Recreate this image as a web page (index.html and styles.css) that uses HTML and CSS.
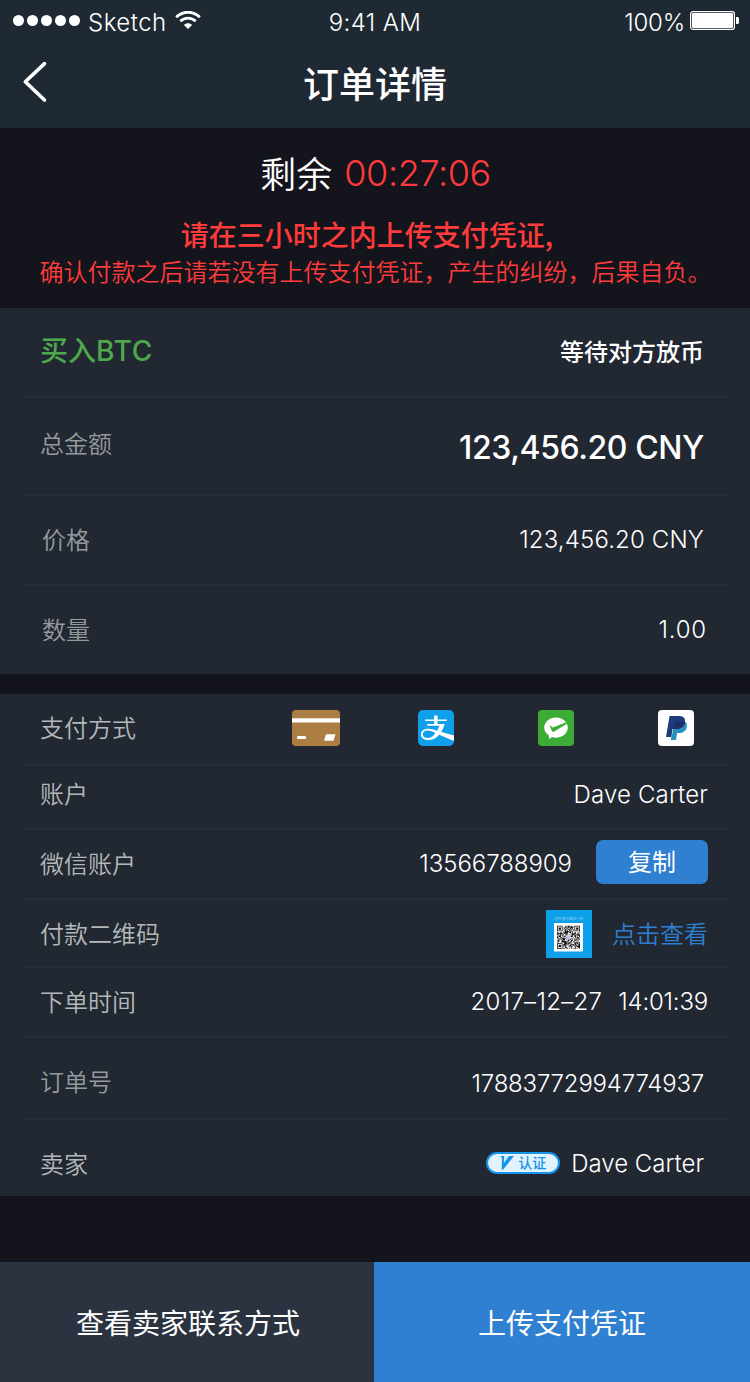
FILE: index.html
```html
<!DOCTYPE html>
<html lang="zh-CN">
<head>
<meta charset="utf-8">
<title>订单详情</title>
<link rel="stylesheet" href="styles.css">
</head>
<body>
<div class="screen">
  <header class="header">
    <div class="status">
      <div class="status-left">
        <span class="dots"><i class="dot"></i><i class="dot"></i><i class="dot"></i><i class="dot"></i><i class="dot"></i></span>
        <span class="carrier">Sketch</span>
        <svg class="wifi" width="26" height="19" viewBox="0 0 26 19" fill="none" stroke="#fff">
          <path d="M1.2 6.2C8 -.4 18 -.4 24.800 6.200" stroke-width="2.900"/>
          <path d="M5.300 10.300C9.700 6.100 16.300 6.100 20.700 10.300" stroke-width="2.700"/>
          <path d="M13 18L8.900 14C11.300 11.800 14.700 11.800 17.100 14Z" fill="#fff" stroke="none"/>
        </svg>
      </div>
      <span class="clock">9:41 AM</span>
      <div class="status-right">
        <span class="percent">100%</span>
        <svg width="50" height="20" viewBox="0 0 50 20">
          <rect x=".6" y=".6" width="43.800" height="17.800" rx="2.500" fill="none" stroke="#fff" stroke-width="1.200"/>
          <rect x="2" y="2" width="41" height="15" rx="1.200" fill="#fff"/>
          <path d="M46 6h1.500q1.500 0 1.500 1.500v4q0 1.500-1.500 1.500H46z" fill="#fff"/>
        </svg>
      </div>
    </div>
    <div class="nav">
      <svg class="back" width="26" height="42" viewBox="0 0 26 42" fill="none" stroke="#fff" stroke-width="3.600" stroke-linecap="round" stroke-linejoin="round"><path d="M22.500 2.600L3.300 20.800L22.500 39"/></svg>
      <h1 class="title">订单详情</h1>
    </div>
  </header>

  <section class="notice">
    <div class="remain"><span class="remain-label">剩余</span><span class="countdown">00:27:06</span></div>
    <div class="warn-strong">请在三小时之内上传支付凭证,</div>
    <div class="warn">确认付款之后请若没有上传支付凭证，产生的纠纷，后果自负。</div>
  </section>

  <section class="card">
    <div class="row row-buy"><span class="buy">买入<span class="buy-coin">BTC</span></span><span class="state">等待对方放币</span></div>
    <div class="row row-total"><span class="label">总金额</span><span class="total">123,456.20 CNY</span></div>
    <div class="row row-price"><span class="label indent">价格</span><span class="value light price">123,456.20 CNY</span></div>
    <div class="row row-count"><span class="label indent">数量</span><span class="value light count">1.00</span></div>
  </section>

  <section class="card">
    <div class="row row-pay">
      <span class="label bright">支付方式</span>
      <div class="pay-icons">
        <svg class="pay-card" width="48" height="36" viewBox="0 0 48 36">
          <rect width="48" height="36" rx="4" fill="#ad7e43"/><path d="M0 8.300h48v4.200H0z" fill="#fff"/>
          <rect x="5" y="26" width="9" height="3" rx="1.200" fill="#fff"/><path d="M34 24.300h9.500l-2 6.500H32z" fill="#fff"/>
        </svg>
        <svg class="pay-ali" width="36" height="36" viewBox="0 0 36 36">
          <rect width="36" height="36" rx="5" fill="#10a0ea"/>
          <path d="M16.100 5.500h3.400v4h9.300v1.600h-9.300v3h7.200c-.8 3-2 5.600-3.400 7.800L36 25.400V31L21.200 24.800c-3.200 3.700-6.700 5.200-10.400 5.200-5.300 0-7.900-2.600-7.900-5.600 0-3.300 2.900-5.600 7.200-5.600 3.200 0 6 .9 9 2 1-1.600 1.800-3.200 2.300-5H9.200v-1.700h6.900v-3H7V9.500h9.100z" fill="#fff"/>
          <path d="M17.400 22.900c-2.700-1.400-5-2.400-7.600-2.400-3.300 0-5.100 1.700-5.100 3.800 0 2.200 1.900 3.700 5.100 3.700 3 0 5.400-1.900 7.600-5.100z" fill="#10a0ea"/>
        </svg>
        <svg class="pay-wx" width="36" height="36" viewBox="0 0 36 36">
          <rect width="36" height="36" rx="4" fill="#3dab38"/>
          <path d="M18 7.500c6.500 0 11.800 4.500 11.800 10.100S24.500 27.700 18 27.700c-1.400 0-2.800-.2-4-.6L11 29l-.2-3.600c-2.800-1.800-4.600-4.600-4.600-7.800C6.200 12 11.500 7.500 18 7.500z" fill="#fff"/>
          <path d="M11.600 15.200l3.500 2.300L28 12.200l1 1.600-12.800 7.600c-1.200.7-2 .2-2.400-.7z" fill="#3dab38"/>
        </svg>
        <svg class="pay-pp" width="36" height="36" viewBox="0 0 36 36">
          <rect width="36" height="36" rx="4" fill="#fff"/>
          <path d="M17 12h10.600c1.300 1.400 1.600 3 1.200 5-.9 4-3.600 6-8 6h-1.700L18 29.900h-5.300z" fill="#2790c3"/>
          <path d="M11.600 6h9.200c4.800 0 7 2.400 6.100 6.600-1 4.300-4 6.400-8.700 6.400h-3.600L13.300 27H8z" fill="#1f3a7d"/>
          <path d="M17.300 12.200c3.500-.8 7-.8 9.700.1-.9 4.500-3.900 6.700-8.800 6.700h-2.400z" fill="#222d65"/>
        </svg>
      </div>
    </div>
    <div class="row row-account"><span class="label bright">账户</span><span class="value account">Dave Carter</span></div>
    <div class="row row-wechat"><span class="label bright">微信账户</span><span class="value phone">13566788909</span><button class="copy">复制</button></div>
    <div class="row row-qr">
      <span class="label bright">付款二维码</span>
      <svg class="qr" width="46" height="48" viewBox="0 0 46 48">
        <rect width="46" height="48" fill="#0e9fe9"/>
        <text class="qr-caption" x="8.500" y="9.600" textLength="28.500">打开支付宝扫一扫</text>
        <rect x="8" y="13" width="29" height="28.500" fill="#fff"/>
        <g id="qr-modules" transform="translate(11 15.800) scale(.793)"></g>
      </svg>
      <span class="link">点击查看</span>
    </div>
    <div class="row row-time"><span class="label bright">下单时间</span><span class="value date">2017–12–27</span><span class="value time">14:01:39</span></div>
    <div class="row row-order"><span class="label">订单号</span><span class="value order-no">17883772994774937</span></div>
    <div class="row row-seller">
      <span class="label bright">卖家</span>
      <span class="badge">
        <svg width="14" height="14" viewBox="0 0 14 14" fill="#1595ec"><path d="M0 0h4.300l-.4 6.900L9 0h5L3.200 13.600H1.700L2 2z"/></svg>
        <span class="badge-text">认证</span>
      </span>
      <span class="value light seller">Dave Carter</span>
    </div>
  </section>

  <footer class="footer">
    <button class="action contact">查看卖家联系方式</button>
    <button class="action upload">上传支付凭证</button>
  </footer>
</div>
<script src="qr.js"></script>
</body>
</html>
```
FILE: styles.css
```css
* { box-sizing: border-box; }
body {
  margin: 0;
  background: #14141c;
  color: #fff;
  font-family: Inter, "Noto Sans CJK SC", sans-serif;
}
.screen { width: 750px; height: 1382px; display: flex; flex-direction: column; overflow: hidden; }
svg { display: block; flex: none; }
button { border: 0; padding: 0; color: #fff; font-family: "Noto Sans CJK SC", sans-serif; }

.header { height: 128px; background: #1f2934; }
.status { height: 40px; display: grid; grid-template-columns: 1fr auto 1fr; font-size: 24px; line-height: 30px; padding: 8px 10px 0 13px; font-weight: 350; }
.status-left, .status-right { display: flex; align-items: flex-start; }
.status-right { justify-content: flex-end; gap: 5px; }
.status-right svg { margin-top: 3px; }
.dots { display: flex; gap: 3px; padding-top: 7px; }
.dot { width: 11px; height: 11px; border-radius: 50%; background: #fff; }
.carrier { margin-left: 8px; letter-spacing: .5px; }
.wifi { margin: 3px 0 0 8px; }
.clock { letter-spacing: .4px; margin-left: -3px; }
.percent { letter-spacing: -.2px; }
.nav { height: 88px; display: grid; grid-template-columns: 80px 1fr 80px; align-items: center; }
.back { margin: -4px 0 0 22px; }
.title { margin: 0; text-align: center; font: 500 36px/52px "Noto Sans CJK SC", sans-serif; padding-bottom: 5px; }

.notice { height: 180px; text-align: center; color: #ff3b3b; }
.remain { display: flex; justify-content: center; gap: 12px; padding: 18px 0 0 1px; font-size: 36px; line-height: 54px; font-weight: 300; color: #fff; }
.remain-label { font: 350 36px/54px "Noto Sans CJK SC", sans-serif; margin: -1px 0 1px; }
.countdown { color: #ff3b3b; letter-spacing: -.4px; }
.warn-strong { margin: 14px 16px 0 0; font: 500 28px/40px "Noto Sans CJK SC", sans-serif; }
.warn { margin: -1px 0 0 1px; font: 350 24px/36px "Noto Sans CJK SC", sans-serif; white-space: nowrap; }

.card { background: #212832; padding: 0 23px 0 24px; margin-bottom: 20px; }
.card + .card { margin-bottom: 66px; }
.row { display: flex; align-items: center; height: 70px; padding-left: 16px; border-bottom: 2px solid #242f3a; line-height: 36px; white-space: nowrap; }
.row:last-child { border-bottom: 0; }
.label { margin: -2px auto 0 0; font: 350 24px/36px "Noto Sans CJK SC", sans-serif; color: #969a9f; }
.bright { color: #b5b8bb; }
.indent { padding-left: 2px; }
.value { font-size: 24px; font-weight: 350; }
.light { font-weight: 300; }

.row-buy { height: 90px; padding-right: 23px; }
.buy { margin-right: auto; margin-top: -4px; font: 500 28px/40px "Noto Sans CJK SC", sans-serif; color: #4fa84c; }
.buy-coin { font-family: Inter, sans-serif; letter-spacing: .7px; }
.state { font: 500 24px/36px "Noto Sans CJK SC", sans-serif; margin-top: -2px; }
.row-total { height: 98px; padding-right: 23px; }
.row-total .label { margin-top: -6px; }
.total { font-size: 32px; font-weight: 550; letter-spacing: -.4px; margin-top: 3px; }
.row-price { height: 90px; padding-right: 23px; }
.price { letter-spacing: .15px; }
.row-count { height: 88px; padding-right: 21px; }
.count { letter-spacing: .8px; margin-right: -1px; }

.row-pay { height: 72px; padding-right: 33px; }
.row-pay .label { margin-top: -4px; }
.pay-icons { display: flex; margin-top: -2px; }
.pay-ali { margin-left: 78px; }
.pay-wx, .pay-pp { margin-left: 84px; }
.row-account { height: 64px; padding-right: 19px; padding-bottom: 5px; }
.row-account .label { margin-top: -3px; }
.account { letter-spacing: .15px; }
.row-wechat { padding-right: 19px; }
.phone { letter-spacing: -.05px; }
.copy { width: 112px; height: 44px; margin: -4px 0 0 24px; border-radius: 7px; background: #2f80d1; font-size: 24px; line-height: 40px; padding-bottom: 3px; }
.row-qr { height: 68px; padding-right: 19px; }
.row-qr .label { margin-top: 0; }
.qr { margin: 2px 20px 0 0; }
.qr-caption { font: 3.500px "Noto Sans CJK SC", sans-serif; fill: #a9def8; }
.link { font: 350 24px/36px "Noto Sans CJK SC", sans-serif; color: #2f80d1; }
.row-time { padding-right: 19px; }
.date { letter-spacing: .3px; }
.time { margin-left: 16px; letter-spacing: -.2px; }
.row-order { height: 82px; padding: 11px 23px 0 16px; }
.row-order .label { margin-top: -6px; }
.order-no { letter-spacing: -.2px; }
.row-seller { height: 76px; padding: 12px 23px 0 16px; }
.badge { width: 74px; height: 22px; margin: -2px 11px 0 0; display: flex; align-items: center; padding-left: 12px; gap: 4px; border: 2px solid #1595ec; border-radius: 11px; background: #e2f2ff; }
.badge-text { font: 500 14px/18px "Noto Sans CJK SC", sans-serif; color: #1595ec; margin-top: -2px; }

.footer { height: 120px; display: grid; grid-template-columns: 374px 376px; }
.action { font-size: 28px; line-height: 40px; }
.contact { background: #2a333f; padding-left: 2px; }
.upload { background: #2f80d1; }
```
FILE: qr.js
```javascript
// Builds the modules of the payment code thumbnail on a 29 x 29 grid.
const size = 29;
const inFinder = (x, y) => (x < 8 && y < 8) || (x > 20 && y < 8) || (x < 8 && y > 20);
const finder = (x, y) => `M${x} ${y}h7v7h-7zM${x + 1} ${y + 1}v5h5v-5zM${x + 2} ${y + 2}h3v3h-3z`;
let path = finder(0, 0) + finder(22, 0) + finder(0, 22);
let seed = 20171227;
for (let y = 0; y < size; y++) {
  for (let x = 0; x < size; x++) {
    seed = (seed * 1103515245 + 12345) % 2147483648;
    const centre = Math.abs(x - 14) < 3 && Math.abs(y - 14) < 3;
    if (!inFinder(x, y) && !centre && seed / 2147483648 > 0.44) path += `M${x} ${y}h1v1h-1z`;
  }
}
document.getElementById("qr-modules").innerHTML =
  `<path d="${path}" fill="#141414"/><rect x="12" y="12" width="5" height="5" fill="#b9c2e2"/>`;
```
